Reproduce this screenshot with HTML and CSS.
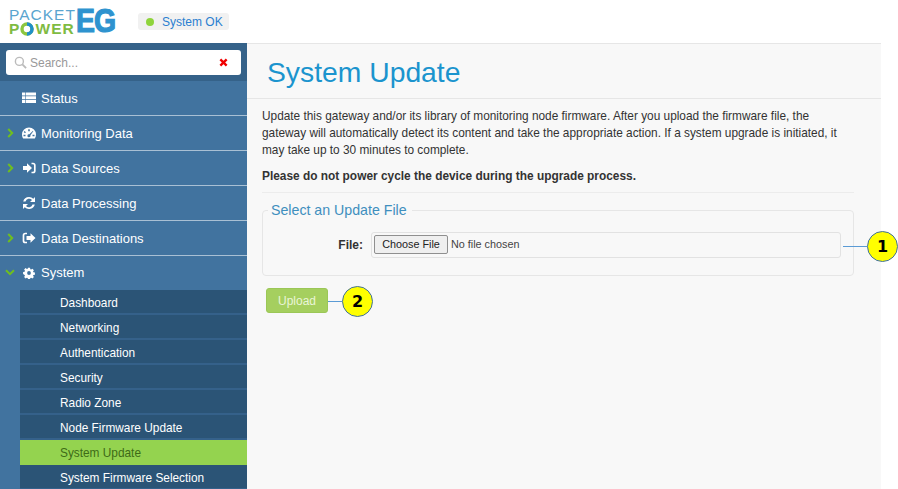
FILE: index.html
```html
<!DOCTYPE html>
<html lang="en">
<head>
<meta charset="utf-8">
<title>System Update</title>
<link rel="stylesheet" href="styles.css">
</head>
<body>
<div class="app">
  <header class="top">
    <div class="logo">
      <div class="logo-words">
        <span class="logo-packet">PACKET</span>
        <span class="logo-power">P<svg class="logo-o" viewBox="0 0 14 14"><circle cx="7" cy="7" r="5" fill="none" stroke="#8cc63f" stroke-width="3.4"/><path d="M7 2a5 5 0 0 1 0 10" fill="none" stroke="#1f8fc9" stroke-width="3.4"/></svg>WER</span>
      </div>
      <span class="logo-eg">EG</span>
    </div>
    <div class="status"><span class="dot"></span>System OK</div>
  </header>
  <div class="main">
    <nav class="side">
      <div class="search-wrap">
        <div class="search">
          <svg class="search-icon" viewBox="0 0 14 14"><circle cx="5.8" cy="5.8" r="4.3" fill="none" stroke="#bbb" stroke-width="1.5"/><path d="M9 9l4 4" stroke="#bbb" stroke-width="2"/></svg>
          <span class="search-text">Search...</span>
          <svg class="search-x" viewBox="0 0 10 10"><path d="M1.5 1.5l7 7M8.500 1.500l-7 7" stroke="#f00000" stroke-width="2.600"/></svg>
        </div>
      </div>
      <ul class="menu">
        <li class="item"><span class="chev"></span><svg class="ico" viewBox="0 0 14 14"><path fill="#fff" d="M0 1.500h3.400v3H0zM4 1.500h10v3H4zM0 5.300h3.400v3H0zM4 5.300h10v3H4zM0 9.100h3.400v3H0zM4 9.100h10v3H4z"/></svg>Status</li>
        <li class="item"><svg class="chev" viewBox="0 0 7 10"><path d="M1.200 1l4 4-4 4" fill="none" stroke="#6fbf1e" stroke-width="2"/></svg><svg class="ico" viewBox="0 0 14 14"><path fill="#fff" fill-rule="evenodd" d="M7 1.500a7 7 0 0 1 7 7c0 1.500-.4 2.900-1.200 4H1.200A7 7 0 0 1 0 8.500a7 7 0 0 1 7-7zM6.200 3.300v2h1.600v-2zM2.600 5l-.9.900 1.300 1.300.9-.9zM11 4.800L7.400 8.300a1.500 1.500 0 1 0 1 1l2.900-4zM1.500 8.700v1.500h2V8.700zM10.500 8.700v1.500h2V8.700z"/></svg>Monitoring Data</li>
        <li class="item"><svg class="chev" viewBox="0 0 7 10"><path d="M1.200 1l4 4-4 4" fill="none" stroke="#6fbf1e" stroke-width="2"/></svg><svg class="ico" viewBox="0 0 14 14"><path fill="#fff" d="M1 5h4V2.300L10 7l-5 4.700V9H1z"/><path d="M9.500 2.500h1.500a1.800 1.800 0 0 1 1.800 1.800v5.400a1.800 1.800 0 0 1-1.800 1.800H9.500" fill="none" stroke="#fff" stroke-width="1.700"/></svg>Data Sources</li>
        <li class="item"><span class="chev"></span><svg class="ico" viewBox="0 0 14 14"><path fill="#fff" d="M7 1a6 6 0 0 1 4.300 1.700L13 1v5H8l2-2A3.800 3.800 0 0 0 3.500 5.500H1.200A6 6 0 0 1 7 1zM1 8h5l-2 2a3.800 3.800 0 0 0 6.500-1.500h2.300A6 6 0 0 1 2.700 11.300L1 13z"/></svg>Data Processing</li>
        <li class="item"><svg class="chev" viewBox="0 0 7 10"><path d="M1.200 1l4 4-4 4" fill="none" stroke="#6fbf1e" stroke-width="2"/></svg><svg class="ico" viewBox="0 0 14 14"><path d="M5 2.500H3.300A1.800 1.800 0 0 0 1.500 4.300v5.400a1.800 1.800 0 0 0 1.800 1.800H5" fill="none" stroke="#fff" stroke-width="1.700"/><path fill="#fff" d="M4.500 5H8.500V2.300L13.500 7l-5 4.700V9H4.500z"/></svg>Data Destinations</li>
        <li class="item open"><svg class="chev" viewBox="0 0 10 7"><path d="M1 1.200l4 4 4-4" fill="none" stroke="#6fbf1e" stroke-width="2"/></svg><svg class="ico" viewBox="0 0 14 14"><path fill="#fff" fill-rule="evenodd" d="M5.800.8h2.400l.3 1.800 1 .4 1.500-1 1.700 1.700-1 1.500.4 1 1.800.3v2.400l-1.800.3-.4 1 1 1.500-1.700 1.700-1.500-1-1 .4-.3 1.800H5.800l-.3-1.800-1-.4-1.500 1-1.700-1.700 1-1.500-.4-1L.1 8.200V5.800l1.800-.3.400-1-1-1.500L3 1.300l1.500 1 1-.4zM7 4.800a2.200 2.200 0 1 0 0 4.400 2.200 2.200 0 0 0 0-4.400z"/></svg>System</li>
      </ul>
      <ul class="sub">
        <li class="sub-item">Dashboard</li>
        <li class="sub-item">Networking</li>
        <li class="sub-item">Authentication</li>
        <li class="sub-item">Security</li>
        <li class="sub-item">Radio Zone</li>
        <li class="sub-item">Node Firmware Update</li>
        <li class="sub-item active">System Update</li>
        <li class="sub-item">System Firmware Selection</li>
      </ul>
    </nav>
    <main class="content">
      <h1 class="title">System Update</h1>
      <div class="body">
        <p class="para">Update this gateway and/or its library of monitoring node firmware. After you upload the firmware file, the gateway will automatically detect its content and take the appropriate action. If a system upgrade is initiated, it may take up to 30 minutes to complete.</p>
        <p class="warn">Please do not power cycle the device during the upgrade process.</p>
        <fieldset class="group">
          <legend class="legend">Select an Update File</legend>
          <div class="field">
            <span class="label">File:</span>
            <div class="file-box"><span class="file-btn">Choose File</span><span class="file-none">No file chosen</span></div>
          </div>
        </fieldset>
        <button class="upload" type="button">Upload</button>
      </div>
    </main>
  </div>
</div>
<div class="callout c1"><span class="line"></span><span class="num">1</span></div>
<div class="callout c2"><span class="line"></span><span class="num">2</span></div>
</body>
</html>
```
FILE: styles.css
```css
* { box-sizing: border-box; }
html, body { margin: 0; height: 489px; overflow: hidden; background: #fff; }
body { font-family: "Liberation Sans", Arial, sans-serif; color: #333; position: relative; }
.app { width: 881px; height: 489px; display: flex; flex-direction: column; overflow: hidden; }

.top { height: 43px; flex: none; display: flex; align-items: flex-start; background: #fff; }
.logo { display: flex; margin: 9px 0 0 9px; width: 109px; }
.logo-words { display: flex; flex-direction: column; width: 70px; }
.logo-packet { font-size: 15.500px; line-height: 12px; letter-spacing: 1px; color: #5aa5cf; height: 12px; white-space: nowrap; }
.logo-power { font-size: 15.500px; line-height: 12px; letter-spacing: 1.100px; color: #7fbb42; font-weight: 700; height: 12px; margin-top: 2px; white-space: nowrap; display: flex; align-items: center; }
.logo-o { width: 14px; height: 14px; margin-right: 1px; }
.logo-eg { display: inline-block; font-size: 33px; font-weight: 700; color: #2e93cf; line-height: 24px; letter-spacing: -1px; -webkit-text-stroke: 1.200px #2e93cf; transform: scaleX(.86); transform-origin: left center; }
.status { margin: 13px 0 0 20px; height: 17px; width: 91px; background: #f1f1f1; border-radius: 3px; display: flex; align-items: center; padding-left: 8px; font-size: 12px; color: #2a7fd0; }
.dot { width: 8px; height: 8px; border-radius: 50%; background: #8fd43c; margin-right: 8px; }

.main { flex: 1; display: flex; min-height: 0; }
.side { width: 247px; flex: none; background: #41739f; display: flex; flex-direction: column; }
.search-wrap { height: 38px; background: #356289; padding: 7px 6px 0; flex: none; }
.search { height: 25px; background: #fff; border-radius: 3px; display: flex; align-items: center; padding: 0 8px; }
.search-icon { width: 13px; height: 13px; margin-right: 3px; }
.search-text { flex: 1; font-size: 12px; color: #999; }
.search-x { width: 9px; height: 9px; margin-right: 5px; }

.menu, .sub { list-style: none; margin: 0; padding: 0; }
.item { height: 35px; display: flex; align-items: center; padding-left: 7px; font-size: 13px; color: #fff; border-bottom: 1px solid #a9c0d4; }
.item.open { border-bottom: 0; height: 34px; padding-bottom: 1px; }
.chev { width: 7px; height: 10px; flex: none; margin-right: 8px; }
.open .chev { width: 10px; height: 7px; margin: 0 7px 0 -2px; }
.ico { width: 14px; height: 14px; flex: none; margin-right: 5px; }
.open .ico { width: 12px; height: 12px; margin: 0 6px 0 1px; }
.sub { margin-left: 20px; background: #2b5476; }
.sub-item { height: 25px; display: flex; align-items: center; padding: 2px 0 0 40px; font-size: 11.850px; color: #fff; border-bottom: 2px solid #35618a; }
.sub-item.active { background: #94d34f; color: #3e6b17; border-bottom-color: #94d34f; }

.content { flex: 1; background: #f8f8f8; min-width: 0; border-top: 1px solid #e6e6e6; }
.title { margin: 0; height: 55px; padding: 10px 0 0 20px; font-size: 28.300px; line-height: 36px; font-weight: 400; color: #1b94ce; border-bottom: 1px solid #e6e6e6; }
.body { padding: 9px 27px 0 15px; }
.para { margin: 0; font-size: 11.850px; line-height: 17px; color: #333; }
.warn { margin: 9px 0 0; padding-bottom: 7px; font-size: 11.900px; line-height: 17px; font-weight: 700; color: #333; border-bottom: 1px solid #ececec; }
.group { margin: 9px 0 0; padding: 13px 12px 0 0; height: 74px; border: 1px solid #e6e6e6; border-radius: 4px; position: relative; min-width: 0; }
.legend { padding: 0 5px 0 3px; margin-left: 5px; font-size: 14.200px; line-height: 17px; color: #3f8fbe; }
.field { display: flex; align-items: center; }
.label { width: 100px; text-align: right; font-size: 12px; font-weight: 700; color: #333; }
.file-box { margin-left: 8px; flex: 1; height: 26px; border: 1px solid #e2e2e2; border-radius: 3px; background: #f8f8f8; display: flex; align-items: center; padding: 0 0 1px 2px; }
.file-btn { height: 19px; width: 74px; background: #efefef; border: 1px solid #8f8f8f; border-radius: 2px; font-size: 10.800px; line-height: 16px; text-align: center; color: #222; }
.file-none { margin: 0 0 2px 3px; font-size: 10.800px; color: #444; }
.upload { display: block; margin: 12px 0 0 4px; width: 62px; height: 25px; background: #a5cf5f; border: 1px solid #9bc757; border-radius: 3px; color: #eaf5d8; font: 12px "Liberation Sans", Arial, sans-serif; padding: 0; }

.callout { position: absolute; display: flex; align-items: center; height: 31px; }
.c1 { left: 843px; top: 231px; }
.c2 { left: 328px; top: 286px; }
.line { height: 1px; background: #5b9bd5; width: 24px; }
.c2 .line { width: 14px; }
.num { width: 31px; height: 31px; border-radius: 50%; background: #ffff00; border: 1px solid #41719c; display: flex; align-items: center; justify-content: center; font-family: "DejaVu Sans", sans-serif; font-weight: 700; font-size: 16px; color: #000; }
```
